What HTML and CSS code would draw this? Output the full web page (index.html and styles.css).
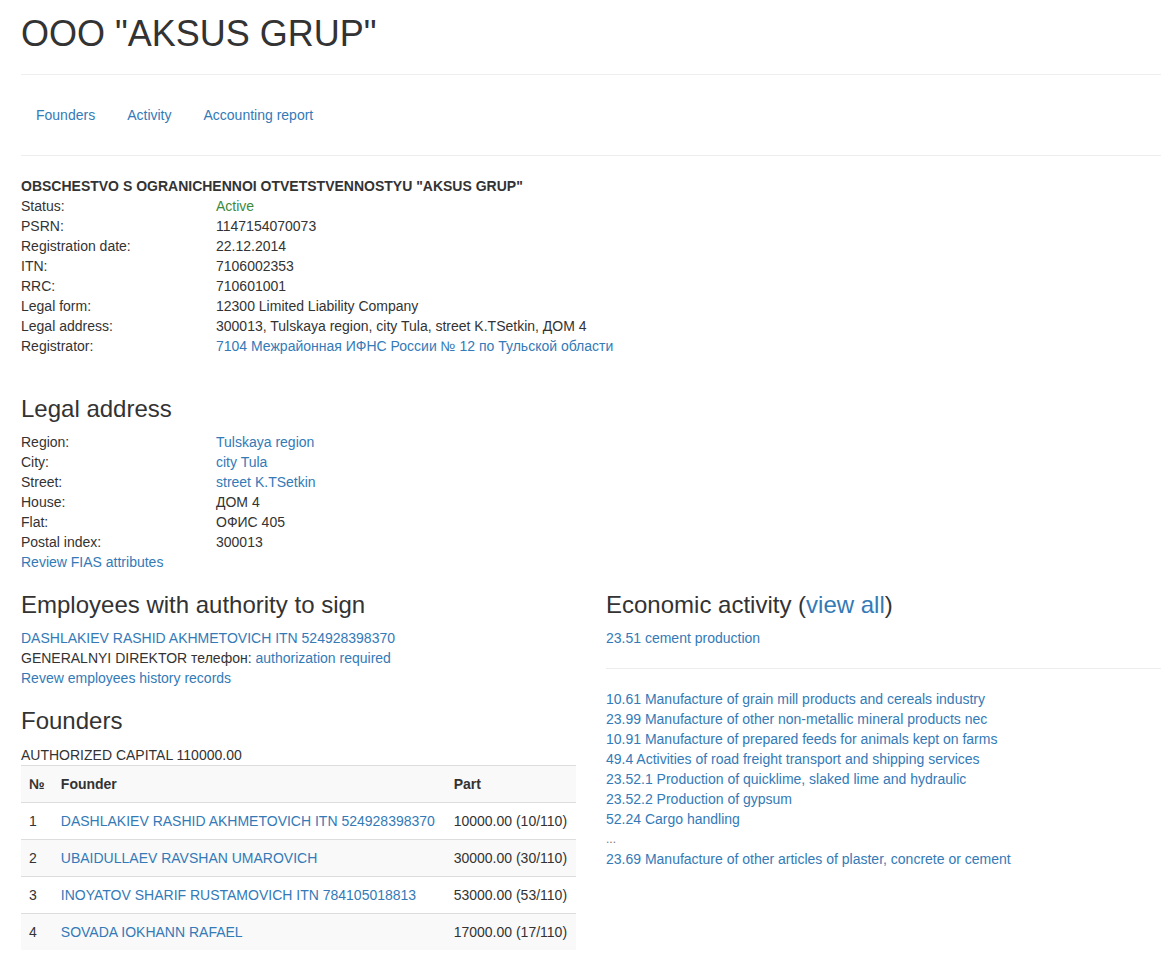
FILE: index.html
```html
<!DOCTYPE html>
<html>
<head>
	<meta charset="utf-8">
	<link rel="stylesheet" href="styles.css">
</head>
<body>
	<div class="page">
		<h1>OOO "AKSUS GRUP"</h1>
		<hr/>
		<ul class="nav">
			<li><a href="#founders">Founders</a></li>
			<li><a href="#activity">Activity</a></li>
			<li><a href="#report">Accounting report</a></li>
		</ul>
		<hr/>
		<div class="fullname">OBSCHESTVO S OGRANICHENNOI OTVETSTVENNOSTYU "AKSUS GRUP"</div>
		<dl class="props main-props">
			<dt>Status:</dt><dd class="active">Active</dd>
			<dt>PSRN:</dt><dd>1147154070073</dd>
			<dt>Registration date:</dt><dd>22.12.2014</dd>
			<dt>ITN:</dt><dd>7106002353</dd>
			<dt>RRC:</dt><dd>710601001</dd>
			<dt>Legal form:</dt><dd>12300 Limited Liability Company</dd>
			<dt>Legal address:</dt><dd>300013, Tulskaya region, city Tula, street K.TSetkin, ДОМ 4</dd>
			<dt>Registrator:</dt><dd><a href="#">7104 Межрайонная ИФНС России № 12 по Тульской области</a></dd>
		</dl>

		<h3>Legal address</h3>
		<dl class="props">
			<dt>Region:</dt><dd><a href="#">Tulskaya region</a></dd>
			<dt>City:</dt><dd><a href="#">city Tula</a></dd>
			<dt>Street:</dt><dd><a href="#">street K.TSetkin</a></dd>
			<dt>House:</dt><dd>ДОМ 4</dd>
			<dt>Flat:</dt><dd>ОФИС 405</dd>
			<dt>Postal index:</dt><dd>300013</dd>
		</dl>
		<div><a href="#">Review FIAS attributes</a></div>

		<div class="columns">
			<div class="col">
				<h3>Employees with authority to sign</h3>
				<div><a href="#">DASHLAKIEV RASHID AKHMETOVICH ITN 524928398370</a></div>
				<div>GENERALNYI DIREKTOR телефон: <a href="#">authorization required</a></div>
				<div><a href="#">Revew employees history records</a></div>

				<h3 id="founders">Founders</h3>
				<div>AUTHORIZED CAPITAL 110000.00</div>
				<table class="founders">
					<tr><th>№</th><th>Founder</th><th>Part</th></tr>
					<tr><td>1</td><td><a href="#">DASHLAKIEV RASHID AKHMETOVICH ITN 524928398370</a></td><td>10000.00 (10/110)</td></tr>
					<tr><td>2</td><td><a href="#">UBAIDULLAEV RAVSHAN UMAROVICH</a></td><td>30000.00 (30/110)</td></tr>
					<tr><td>3</td><td><a href="#">INOYATOV SHARIF RUSTAMOVICH ITN 784105018813</a></td><td>53000.00 (53/110)</td></tr>
					<tr><td>4</td><td><a href="#">SOVADA IOKHANN RAFAEL</a></td><td>17000.00 (17/110)</td></tr>
				</table>
			</div>
			<div class="col" id="activity">
				<h3>Economic activity (<a href="#">view all</a>)</h3>
				<div><a href="#">23.51 cement production</a></div>
				<hr/>
				<div><a href="#">10.61 Manufacture of grain mill products and cereals industry</a></div>
				<div><a href="#">23.99 Manufacture of other non-metallic mineral products nec</a></div>
				<div><a href="#">10.91 Manufacture of prepared feeds for animals kept on farms</a></div>
				<div><a href="#">49.4 Activities of road freight transport and shipping services</a></div>
				<div><a href="#">23.52.1 Production of quicklime, slaked lime and hydraulic</a></div>
				<div><a href="#">23.52.2 Production of gypsum</a></div>
				<div><a href="#">52.24 Cargo handling</a></div>
				<div class="more">...</div>
				<div><a href="#">23.69 Manufacture of other articles of plaster, concrete or cement</a></div>
			</div>
		</div>
	</div>
</body>
</html>
```

FILE: styles.css
```css
body {margin:0;font-family:"Liberation Sans",Arial,sans-serif;font-size:14px;line-height:20px;color:#333;background:#fff;}
a {color:#337ab7;text-decoration:none;}
.page {width:1140px;padding-left:21px;}
h1 {font-size:36px;font-weight:normal;line-height:39.6px;margin:14px 0 20px;}
h3 {font-size:24px;font-weight:normal;line-height:26.4px;margin:20px 0 10px;}
hr {border:0;border-top:1px solid #eee;margin:20px 0;height:0;}
.nav {list-style:none;margin:0;padding:0;display:flex;gap:2px;}
.nav a {display:block;padding:10px 15px;}
.fullname {font-weight:bold;}
.props {display:grid;grid-template-columns:195px 1fr;margin:0;}
.props dt, .props dd {margin:0;}
.main-props {margin-bottom:40px;}
.active {color:#3c8a3c;}
.columns {display:flex;gap:30px;}
.col {flex:1;min-width:0;}
.founders {width:100%;border-collapse:collapse;margin-bottom:20px;}
.founders th, .founders td {padding:8px;text-align:left;border-top:1px solid #ddd;vertical-align:top;}
.founders tr:nth-child(odd) {background:#f9f9f9;}
.more {color:#777;font-size:12px;}
```
